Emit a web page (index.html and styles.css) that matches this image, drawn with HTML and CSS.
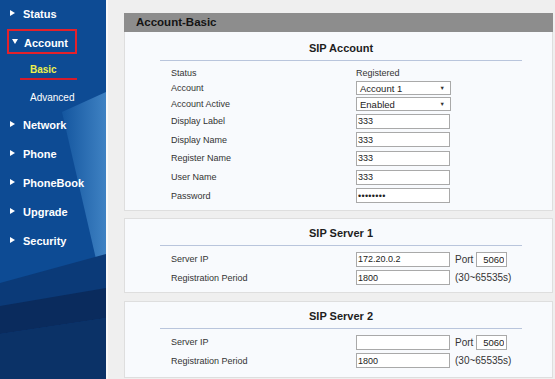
FILE: index.html
```html
<!DOCTYPE html>
<html lang="en">
<head>
<meta charset="utf-8">
<title>Account-Basic</title>
<link rel="stylesheet" href="styles.css">
</head>
<body>
<aside class="sidebar">
  <svg class="sidebar-bg" width="106" height="379" viewBox="0 0 106 379" aria-hidden="true">
    <defs>
      <linearGradient id="lite" x1="0" y1="0" x2="1" y2="0">
        <stop offset="0" stop-color="#14569f"/>
        <stop offset="1" stop-color="#3f82c3"/>
      </linearGradient>
    </defs>
    <rect width="106" height="379" fill="#0d4b94"/>
    <polygon points="62,112 106,92 106,256 96,259" fill="url(#lite)"/>
    <polygon points="0,283 106,254 106,379 0,379" fill="#0b3a78"/>
    <polygon points="0,306 106,288 106,318 0,334" fill="#0a2b5d"/>
    <polygon points="0,334 106,318 106,379 0,379" fill="#0b3267"/>
  </svg>
  <ul class="menu">
    <li class="menu-item first"><span class="tri-right"></span>Status</li>
    <li class="menu-item"><div class="menu-open"><span class="tri-down"></span>Account</div></li>
    <li class="sub-item active"><span class="sub-label">Basic</span><span class="underline"></span></li>
    <li class="sub-item plain">Advanced</li>
    <li class="menu-item"><span class="tri-right"></span>Network</li>
    <li class="menu-item"><span class="tri-right"></span>Phone</li>
    <li class="menu-item"><span class="tri-right"></span>PhoneBook</li>
    <li class="menu-item"><span class="tri-right"></span>Upgrade</li>
    <li class="menu-item"><span class="tri-right"></span>Security</li>
  </ul>
</aside>
<main class="main">
  <section class="panel panel-first">
    <div class="panel-head">Account-Basic</div>
    <div class="panel-body body-first">
      <div class="group">
        <div class="group-title">SIP Account</div>
        <div class="rows">
          <div class="row row-status"><span class="label">Status</span><span class="value">Registered</span></div>
          <div class="row row-select"><span class="label">Account</span><div class="select"><span>Account 1</span><span class="arrow">&#9660;</span></div></div>
          <div class="row row-select"><span class="label">Account Active</span><div class="select"><span>Enabled</span><span class="arrow">&#9660;</span></div></div>
          <div class="row row-input"><span class="label">Display Label</span><input class="field" type="text" value="333"></div>
          <div class="row row-input"><span class="label">Display Name</span><input class="field" type="text" value="333"></div>
          <div class="row row-input"><span class="label">Register Name</span><input class="field" type="text" value="333"></div>
          <div class="row row-input"><span class="label">User Name</span><input class="field" type="text" value="333"></div>
          <div class="row row-input"><span class="label">Password</span><input class="field pass" type="password" value="12345678"></div>
        </div>
      </div>
    </div>
  </section>

  <section class="panel panel-box">
    <div class="panel-body">
      <div class="group">
        <div class="group-title">SIP Server 1</div>
        <div class="rows">
          <div class="row row-server"><span class="label">Server IP</span><input class="field" type="text" value="172.20.0.2"><span class="extra">Port<input class="field port" type="text" value="5060"></span></div>
          <div class="row row-server"><span class="label">Registration Period</span><input class="field" type="text" value="1800"><span class="extra">(30~65535s)</span></div>
        </div>
      </div>
    </div>
  </section>

  <section class="panel panel-box panel-last">
    <div class="panel-body body-last">
      <div class="group">
        <div class="group-title">SIP Server 2</div>
        <div class="rows">
          <div class="row row-server"><span class="label">Server IP</span><input class="field" type="text" value=""><span class="extra">Port<input class="field port" type="text" value="5060"></span></div>
          <div class="row row-server"><span class="label">Registration Period</span><input class="field" type="text" value="1800"><span class="extra">(30~65535s)</span></div>
        </div>
      </div>
    </div>
  </section>
</main>
</body>
</html>
```

FILE: styles.css
```css
* { box-sizing: border-box; }

html, body {
  margin: 0;
  padding: 0;
}

body {
  width: 555px;
  height: 379px;
  overflow: hidden;
  display: flex;
  background: #eeeeee;
  font-family: "Liberation Sans", Arial, sans-serif;
  color: #333;
}

/* ---------- sidebar ---------- */
.sidebar {
  position: relative;
  flex: none;
  width: 106px;
  height: 379px;
  border-left: 2px solid #2a62a6;
}

.sidebar-bg {
  position: absolute;
  left: -2px;
  top: 0;
  z-index: 0;
}

.menu {
  position: relative;
  z-index: 1;
  list-style: none;
  margin: 0;
  padding: 0;
}

.menu-item {
  height: 29px;
  display: flex;
  align-items: center;
  padding-left: 8px;
  color: #fff;
  font-weight: bold;
  font-size: 11px;
}

.menu-item.first { height: 27px; }

.tri-right {
  width: 0;
  height: 0;
  border-left: 5px solid #fff;
  border-top: 3px solid transparent;
  border-bottom: 3px solid transparent;
  margin-right: 8px;
  margin-top: -2px;
}

.tri-down {
  width: 0;
  height: 0;
  border-top: 5px solid #fff;
  border-left: 3px solid transparent;
  border-right: 3px solid transparent;
  margin-right: 6px;
  margin-left: 1px;
  margin-top: -2px;
}

.menu-open {
  display: flex;
  align-items: center;
  width: 70px;
  height: 25px;
  margin-left: -3px;
  padding-left: 2px;
  padding-top: 2px;
  border: 2px solid #e3212b;
}

.sub-item {
  color: #fff;
  font-size: 10px;
  padding-left: 28px;
}

.sub-item.active {
  height: 28px;
  padding-top: 8px;
  display: flex;
  flex-direction: column;
}

.sub-label {
  line-height: 12px;
  font-size: 10px;
  font-weight: bold;
  color: #eef04c;
}

.underline {
  display: block;
  width: 57px;
  height: 2px;
  margin-top: 2px;
  margin-left: -10px;
  background: #d41c2c;
}

.sub-item.plain {
  height: 26px;
  display: flex;
  align-items: center;
}

/* ---------- main ---------- */
.main {
  flex: 1;
  padding: 13px 2px 0 18px;
  display: flex;
  flex-direction: column;
  background: linear-gradient(90deg, #f9f9f9 0, #f9f9f9 2px, #efefef 2px);
}

.panel {
  flex: none;
}

.panel-head {
  height: 19px;
  line-height: 19px;
  background: #8d8d8d;
  color: #141414;
  font-weight: bold;
  font-size: 11.5px;
  padding-left: 12px;
}

.panel-body {
  background: #f8fafd;
  border: 1px solid #dedede;
  padding: 6px 0 5px;
}

.body-first {
  border-top: none;
  padding-top: 8px;
}

.body-last {
  padding-bottom: 7px;
}

.panel-box { margin-top: 7px; }
.panel-last { margin-top: 8px; }

.group {
  margin: 0 30px 0 35px;
}

.group-title {
  text-align: center;
  font-weight: bold;
  font-size: 11px;
  line-height: 16px;
  color: #1e1e1e;
  padding-bottom: 4px;
  border-bottom: 1px solid #b9c5dc;
}

.rows {
  margin-top: 4px;
  padding-left: 11px;
}

.row {
  display: grid;
  grid-template-columns: 185px 94px auto;
  align-items: center;
  font-size: 9px;
}

.row-status { height: 15px; }
.row-select { height: 16px; }
.row-input { height: 18.6px; }
.row-server { height: 18.5px; }

.label { color: #333; }
.value { color: #333; }

.select {
  width: 95px;
  height: 14px;
  border: 1px solid #a9a9a9;
  background: #fff;
  display: flex;
  align-items: center;
  justify-content: space-between;
  padding: 0 5px 0 3px;
  font-size: 9.5px;
  color: #222;
}

.arrow {
  font-size: 5.5px;
  color: #333;
}

.field {
  width: 94px;
  height: 15px;
  margin: 0;
  border: 1px solid #a9a9a9;
  background: #fff;
  padding: 0 1px;
  font-family: "Liberation Sans", Arial, sans-serif;
  font-size: 9px;
  color: #222;
  outline: none;
}

.field.pass {
  font-size: 9px;
  letter-spacing: 0.3px;
}

.extra {
  display: flex;
  align-items: center;
  gap: 3px;
  margin-left: 5px;
  font-size: 10px;
  color: #333;
}

.field.port {
  width: 31px;
  text-align: right;
  padding-right: 2px;
  font-size: 9.5px;
}
```
